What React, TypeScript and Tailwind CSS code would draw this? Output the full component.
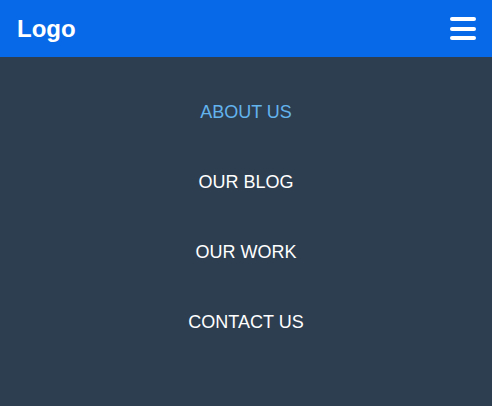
import React from 'react';

export default function App() {
  const links = [
    { label: 'ABOUT US', active: true },
    { label: 'OUR BLOG' },
    { label: 'OUR WORK' },
    { label: 'CONTACT US' },
  ];

  return (
    <div className="flex min-h-[406px] flex-col font-['Liberation_Sans',Arial,sans-serif]">
      <header className="flex h-[57px] items-center justify-between bg-[#0869e8] pl-[17px] pr-4">
        <a className="text-[24px] font-bold leading-none text-white">Logo</a>
        <button className="flex h-[23px] w-[26px] flex-col justify-between" aria-label="Menu">
          <span className="h-[4px] w-full rounded-full bg-white" />
          <span className="h-[4px] w-full rounded-full bg-white" />
          <span className="h-[4px] w-full rounded-full bg-white" />
        </button>
      </header>

      <nav className="flex flex-1 flex-col items-center bg-[#2d3e50] pt-5">
        {links.map((link) => (
          <a
            key={link.label}
            className={`flex h-[70px] items-center text-[18px] ${link.active ? 'text-[#63b3ed]' : 'text-white'}`}
          >
            {link.label}
          </a>
        ))}
      </nav>
    </div>
  );
}
